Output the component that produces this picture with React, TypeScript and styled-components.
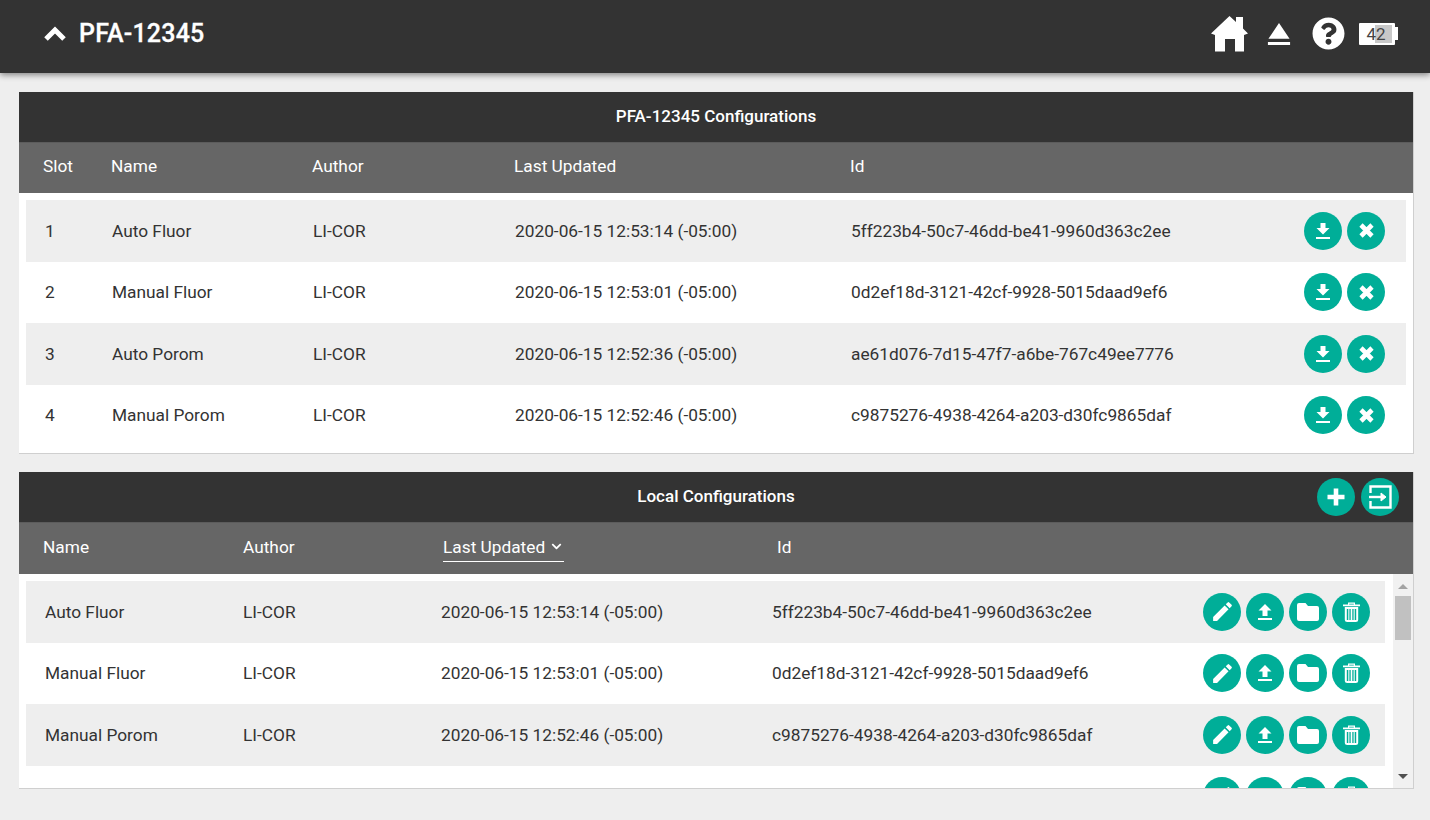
import React from "react";
import styled, { createGlobalStyle } from "styled-components";
import { FaChevronDown, FaQuestionCircle } from "react-icons/fa";
import { MdEdit, MdEject } from "react-icons/md";

const GlobalStyle = createGlobalStyle`
  html, body {
    margin: 0;
    padding: 0;
    background: #eeeeee;
    font-family: Roboto, "Liberation Sans", sans-serif;
    overflow: hidden;
  }
`;

const Page = styled.div`
  width: 1430px;
  height: 820px;
  display: flex;
  flex-direction: column;
`;

const TopBar = styled.header`
  height: 73px;
  flex: none;
  background: #333333;
  box-shadow: 0 2px 6px rgba(0, 0, 0, 0.45);
  display: flex;
  align-items: center;
  justify-content: space-between;
  padding: 0 32px 6px 44px;
  box-sizing: border-box;
  color: #fff;
`;

const TopTitle = styled.div`
  display: flex;
  align-items: center;
  gap: 13px;
  font-size: 25px;
  font-weight: 500;
  letter-spacing: 0.2px;
  -webkit-text-stroke: 0.3px #fff;
`;

const TopIcons = styled.div`
  display: flex;
  align-items: center;
`;

const EjectIcon = styled(MdEject)`
  margin-left: 12px;
`;

const HelpIcon = styled(FaQuestionCircle)`
  margin-left: 14px;
`;

const Battery = styled.div`
  position: relative;
  width: 36px;
  height: 22px;
  margin-left: 14px;
  margin-right: 3px;
  padding-right: 2px;
  box-sizing: border-box;
  background: #fff;
  border-radius: 1px;
  display: flex;
  align-items: center;
  justify-content: center;
  color: #444;
  font-size: 17px;
  &::before {
    content: "";
    position: absolute;
    left: 16px;
    top: 2px;
    width: 17px;
    height: 18px;
    background: #c8c8c8;
  }
  &::after {
    content: "";
    position: absolute;
    right: -3px;
    top: 4px;
    width: 3px;
    height: 13px;
    background: #fff;
  }
`;

const BatteryText = styled.span`
  position: relative;
  z-index: 1;
`;

const Content = styled.main`
  padding: 19px 16px 0 19px;
  display: flex;
  flex-direction: column;
  gap: 18px;
`;

const Panel = styled.section`
  background: #fff;
  border-right: 1px solid #cfcfcf;
  border-bottom: 1px solid #cfcfcf;
`;

const TitleBar = styled.div`
  position: relative;
  height: 50px;
  padding-bottom: 2px;
  box-sizing: border-box;
  background: #333333;
  color: #fff;
  font-size: 17px;
  font-weight: 500;
  display: flex;
  align-items: center;
  justify-content: center;
`;

const TitleActions = styled.div`
  position: absolute;
  right: 14px;
  top: 6px;
  display: flex;
  gap: 6px;
`;

const HeadRow = styled.div<{ $columns: string; $height: number }>`
  height: ${(p) => p.$height}px;
  background: #666666;
  color: #fff;
  font-size: 17.3px;
  font-weight: 400;
  display: grid;
  grid-template-columns: ${(p) => p.$columns};
  align-items: center;
  padding: 0 0 4px 24px;
  border-top: 1px solid #5c5c5c;
  box-sizing: border-box;
`;

const SortLabel = styled.span`
  position: relative;
  display: inline-flex;
  align-items: center;
  gap: 6px;
  width: 121px;
  white-space: nowrap;
  &::after {
    content: "";
    position: absolute;
    left: 0;
    right: 0;
    bottom: -5px;
    height: 1px;
    background: #fff;
  }
`;

const Rows = styled.div`
  padding: 7px 7px 7px 7px;
`;

const ScrollBody = styled.div`
  display: flex;
  height: 214px;
`;

const ScrollRows = styled.div`
  flex: 1;
  overflow: hidden;
  padding: 7px 8px 0 7px;
`;

const Row = styled.div<{ $columns: string; $shaded: boolean }>`
  height: 61.5px;
  display: grid;
  grid-template-columns: ${(p) => p.$columns};
  align-items: center;
  background: ${(p) => (p.$shaded ? "#eeeeee" : "#ffffff")};
  color: #333333;
  font-size: 17.3px;
  padding-left: 19px;
`;

const Cell = styled.span`
  white-space: nowrap;
`;

const Actions = styled.div<{ $pad: number }>`
  display: flex;
  justify-content: flex-end;
  gap: 5px;
  padding-right: ${(p) => p.$pad}px;
`;

const RoundButton = styled.button`
  width: 38px;
  height: 38px;
  flex: none;
  border: none;
  border-radius: 50%;
  padding: 0;
  background: #00ae98;
  color: #fff;
  display: flex;
  align-items: center;
  justify-content: center;
`;

const ScrollBar = styled.div`
  width: 20px;
  flex: none;
  background: #f1f1f1;
  display: flex;
  flex-direction: column;
  align-items: center;
  padding: 10px 2px 9px;
  box-sizing: border-box;
`;

const Thumb = styled.div`
  width: 16px;
  height: 44px;
  margin-top: 7px;
  background: #c1c1c1;
`;

const ArrowUp = styled.div`
  width: 0;
  height: 0;
  border-left: 5px solid transparent;
  border-right: 5px solid transparent;
  border-bottom: 5px solid #a3a3a3;
`;

const ArrowDown = styled.div`
  width: 0;
  height: 0;
  margin-top: auto;
  border-left: 5px solid transparent;
  border-right: 5px solid transparent;
  border-top: 5px solid #505050;
`;

const HomeIcon = () => (
  <svg width="37" height="36" viewBox="0 0 37 36" fill="#fff">
    <path d="M18.5 0L25 6V1H32V12.5L37 17.5L33 19V35.5H24V23H14V35.5H4V19L0 17.5Z" />
  </svg>
);

const ChevronIcon = () => (
  <svg width="22" height="15" viewBox="0 0 22 15" fill="none" stroke="#fff" strokeWidth="5">
    <path d="M2 13L11 4L20 13" />
  </svg>
);

const DownloadIcon = () => (
  <svg width="14" height="16" viewBox="0 0 14 16" fill="#fff">
    <path d="M4.5 0H9.5V5H13.5L7 11.5L0.5 5H4.5Z" />
    <rect x="0" y="14" width="14" height="2" />
  </svg>
);

const UploadIcon = () => (
  <svg width="14" height="16" viewBox="0 0 14 16" fill="#fff">
    <path d="M7 0L13.5 6.5H9.5V12H4.5V6.5H0.5Z" />
    <rect x="0" y="14" width="14" height="2" />
  </svg>
);

const CloseIcon = () => (
  <svg width="15" height="15" viewBox="0 0 15 15" fill="none" stroke="#fff" strokeWidth="4.6">
    <path d="M2 2L13 13M13 2L2 13" />
  </svg>
);

const PlusIcon = () => (
  <svg width="18" height="18" viewBox="0 0 18 18" fill="none" stroke="#fff" strokeWidth="4.6">
    <path d="M9 0.5V17.5M0.5 9H17.5" />
  </svg>
);

const ImportIcon = () => (
  <svg width="24" height="24" viewBox="0 0 24 24" fill="none" stroke="#fff" strokeWidth="2.4">
    <path d="M2.5 8V1.5H22.5V22.5H2.5V16" />
    <path d="M1 12H14" />
    <path d="M13 8L18 12L13 16Z" fill="#fff" strokeWidth="1" />
  </svg>
);

const FolderIcon = () => (
  <svg width="22" height="18" viewBox="0 0 22 18" fill="#fff">
    <path d="M2 0H8.5L11 3H20A2 2 0 0 1 22 5V16A2 2 0 0 1 20 18H2A2 2 0 0 1 0 16V2A2 2 0 0 1 2 0Z" />
  </svg>
);

const TrashIcon = () => (
  <svg width="17" height="20" viewBox="0 0 17 20" fill="#fff">
    <path d="M5 2.5V0.5H12V2.5H17V4.2H0V2.5ZM6.2 2.5H10.8V1.7H6.2Z" fillRule="evenodd" />
    <path
      fillRule="evenodd"
      d="M1.8 5H15.2V17.5A2.5 2.5 0 0 1 12.7 20H4.3A2.5 2.5 0 0 1 1.8 17.5ZM3.8 7V18H5.3V7ZM6.4 7V18H7.7V7ZM9.3 7V18H10.6V7ZM11.7 7V18H13.2V7Z"
    />
  </svg>
);

const deviceHead = "68px 201px 202px 336px 1fr";
const deviceColumns = "67px 201px 202px 336px 1fr 110px";
const localHead = "200px 200px 334px 1fr";
const localColumns = "198px 198px 331px 1fr 195px";

const deviceRows = [
  ["1", "Auto Fluor", "LI-COR", "2020-06-15 12:53:14 (-05:00)", "5ff223b4-50c7-46dd-be41-9960d363c2ee"],
  ["2", "Manual Fluor", "LI-COR", "2020-06-15 12:53:01 (-05:00)", "0d2ef18d-3121-42cf-9928-5015daad9ef6"],
  ["3", "Auto Porom", "LI-COR", "2020-06-15 12:52:36 (-05:00)", "ae61d076-7d15-47f7-a6be-767c49ee7776"],
  ["4", "Manual Porom", "LI-COR", "2020-06-15 12:52:46 (-05:00)", "c9875276-4938-4264-a203-d30fc9865daf"],
];

const localRows = [
  ["Auto Fluor", "LI-COR", "2020-06-15 12:53:14 (-05:00)", "5ff223b4-50c7-46dd-be41-9960d363c2ee"],
  ["Manual Fluor", "LI-COR", "2020-06-15 12:53:01 (-05:00)", "0d2ef18d-3121-42cf-9928-5015daad9ef6"],
  ["Manual Porom", "LI-COR", "2020-06-15 12:52:46 (-05:00)", "c9875276-4938-4264-a203-d30fc9865daf"],
  ["", "", "", ""],
];

const App: React.FC = () => {
  return (
    <Page>
      <GlobalStyle />
      <TopBar>
        <TopTitle>
          <ChevronIcon />
          PFA-12345
        </TopTitle>
        <TopIcons>
          <HomeIcon />
          <EjectIcon size={38} />
          <HelpIcon size={33} />
          <Battery>
            <BatteryText>42</BatteryText>
          </Battery>
        </TopIcons>
      </TopBar>

      <Content>
        <Panel>
          <TitleBar>PFA-12345 Configurations</TitleBar>
          <HeadRow $columns={deviceHead} $height={51}>
            <span>Slot</span>
            <span>Name</span>
            <span>Author</span>
            <span>Last Updated</span>
            <span>Id</span>
          </HeadRow>
          <Rows>
            {deviceRows.map((row, i) => (
              <Row key={row[0]} $columns={deviceColumns} $shaded={i % 2 === 0}>
                {row.map((cell, j) => (
                  <Cell key={j}>{cell}</Cell>
                ))}
                <Actions $pad={21}>
                  <RoundButton>
                    <DownloadIcon />
                  </RoundButton>
                  <RoundButton>
                    <CloseIcon />
                  </RoundButton>
                </Actions>
              </Row>
            ))}
          </Rows>
        </Panel>

        <Panel>
          <TitleBar>
            Local Configurations
            <TitleActions>
              <RoundButton>
                <PlusIcon />
              </RoundButton>
              <RoundButton>
                <ImportIcon />
              </RoundButton>
            </TitleActions>
          </TitleBar>
          <HeadRow $columns={localHead} $height={52}>
            <span>Name</span>
            <span>Author</span>
            <SortLabel>
              Last Updated
              <FaChevronDown size={11} />
            </SortLabel>
            <span>Id</span>
          </HeadRow>
          <ScrollBody>
            <ScrollRows>
              {localRows.map((row, i) => (
                <Row key={i} $columns={localColumns} $shaded={i % 2 === 0}>
                  {row.map((cell, j) => (
                    <Cell key={j}>{cell}</Cell>
                  ))}
                  <Actions $pad={15}>
                    <RoundButton>
                      <MdEdit size={25} />
                    </RoundButton>
                    <RoundButton>
                      <UploadIcon />
                    </RoundButton>
                    <RoundButton>
                      <FolderIcon />
                    </RoundButton>
                    <RoundButton>
                      <TrashIcon />
                    </RoundButton>
                  </Actions>
                </Row>
              ))}
            </ScrollRows>
            <ScrollBar>
              <ArrowUp />
              <Thumb />
              <ArrowDown />
            </ScrollBar>
          </ScrollBody>
        </Panel>
      </Content>
    </Page>
  );
};

export default App;
